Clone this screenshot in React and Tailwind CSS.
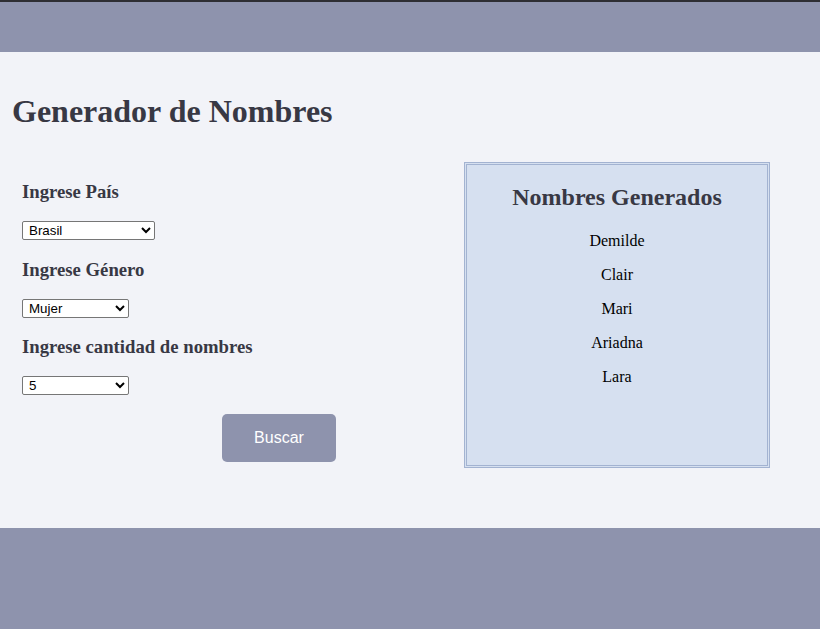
import { useState } from 'react';

const NOMBRES = ['Demilde', 'Clair', 'Mari', 'Ariadna', 'Lara'];

const selectCls =
  "block h-[19px] border border-[#767676] bg-white text-black rounded-[2px] text-[13.33px] font-['Liberation_Sans',Arial,sans-serif] pl-[2px]";

export default function App() {
  const [pais, setPais] = useState('Brasil');
  const [genero, setGenero] = useState('Mujer');
  const [cantidad, setCantidad] = useState('5');

  return (
    <div className="min-h-[629px] flex flex-col font-['Liberation_Serif','Times_New_Roman',serif] bg-[#f2f3f8]">
      {/* Header */}
      <header className="h-[52px] bg-[#8e93ad] border-t-2 border-[#2e2e33]" />

      {/* Main */}
      <main className="h-[476px] bg-[#f2f3f8] px-3 pt-5">
        <h1 className="mt-[21px] mb-0 text-[32px] leading-[37px] font-bold text-[#383844]">
          Generador de Nombres
        </h1>

        <div className="flex items-start mt-[32px]">
          {/* Form */}
          <div className="w-[452px] pl-[10px] text-[#383844]">
            <h3 className="mt-[19px] text-[18.72px] leading-[21.5px] font-bold">Ingrese País</h3>
            <select value={pais} onChange={e => setPais(e.target.value)} className={`${selectCls} w-[133px] mt-[18.5px]`}>
              <option>Brasil</option>
              <option>Argentina</option>
              <option>Chile</option>
              <option>España</option>
            </select>

            <h3 className="mt-[18.5px] text-[18.72px] leading-[21.5px] font-bold">Ingrese Género</h3>
            <select value={genero} onChange={e => setGenero(e.target.value)} className={`${selectCls} w-[107px] mt-[18.5px]`}>
              <option>Mujer</option>
              <option>Hombre</option>
            </select>

            <h3 className="mt-[18.5px] text-[18.72px] leading-[21.5px] font-bold">Ingrese cantidad de nombres</h3>
            <select value={cantidad} onChange={e => setCantidad(e.target.value)} className={`${selectCls} w-[107px] mt-[18.5px]`}>
              <option>5</option>
              <option>10</option>
              <option>15</option>
            </select>

            <button className="mt-[18.5px] ml-[200px] w-[114px] h-[48px] rounded-[5px] bg-[#8e93ad] text-white text-[16px] font-['Liberation_Sans',Arial,sans-serif]">
              Buscar
            </button>
          </div>

          {/* Results */}
          <div className="w-[306px] h-[306px] border-[3px] border-double border-[#a3b3d1] bg-[#d6e0f0] text-center">
            <h2 className="mt-[19px] text-[24px] leading-[27.6px] font-bold text-[#383844]">
              Nombres Generados
            </h2>
            <div className="mt-[20px]">
              {NOMBRES.map(n => (
                <p key={n} className="mb-4 text-[16px] leading-[18px] text-black">{n}</p>
              ))}
            </div>
          </div>
        </div>
      </main>

      {/* Footer */}
      <footer className="flex-1 h-[101px] bg-[#8e93ad]" />
    </div>
  );
}
